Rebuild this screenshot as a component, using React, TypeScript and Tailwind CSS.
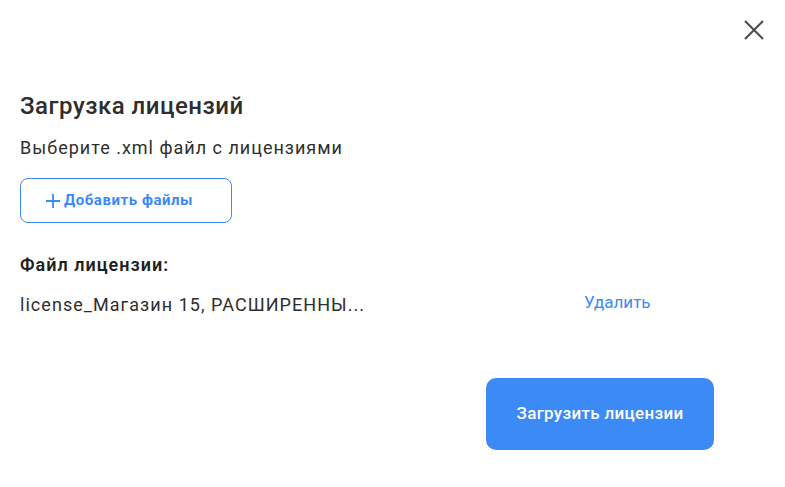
import React from "react";

export default function App() {
  return (
    <div className="w-[785px] h-[487px] bg-white flex flex-col" style={{ fontFamily: "Roboto, 'Noto Sans', sans-serif" }}>
      <div className="flex justify-end pt-[19px] pr-[20px]">
        <button className="w-[22px] h-[22px] flex items-center justify-center text-[#4a4a4a]">
          <svg width="22" height="22" viewBox="0 0 22 22" fill="none" stroke="currentColor" strokeWidth="2">
            <path d="M2 2 L20 20 M20 2 L2 20" />
          </svg>
        </button>
      </div>
      <div className="px-5">
        <h1 className="mt-[51px] text-[24px] leading-[28px] font-medium tracking-[0.5px] text-[#2e2e2e]">Загрузка лицензий</h1>
        <p className="mt-[16px] text-[18px] leading-[24px] tracking-[1px] text-[#2e2e2e]">Выберите .xml файл с лицензиями</p>
        <button className="mt-[18px] w-[212px] h-[45px] border border-[#3b8af5] rounded-[8px] flex items-center pl-[25px] gap-[4px] text-[#3b8af5] text-[15px] font-bold tracking-[0.55px]">
          <svg width="14" height="14" viewBox="0 0 14 14" stroke="currentColor" strokeWidth="1.8">
            <path d="M7 0 V14 M0 7 H14" />
          </svg>
          <span>Добавить файлы</span>
        </button>
        <div className="mt-[30px] text-[18px] leading-[24px] font-semibold tracking-[1px] text-[#1f1f1f]">Файл лицензии:</div>
        <div className="mt-[13px] flex items-center">
          <span className="w-[564px] text-[18px] leading-[24px] tracking-[1.05px] text-[#2e2e2e]">license_Магазин 15, РАСШИРЕННЫ...</span>
          <span className="pb-[6px] text-[17px] leading-[24px] text-[#3b8af5]">Удалить</span>
        </div>
        <div className="mt-[58px] flex justify-end pr-[51px]">
          <button className="w-[228px] h-[72px] rounded-[10px] bg-[#3b8af5] text-white text-[17px] font-medium tracking-[0.3px]">
            Загрузить лицензии
          </button>
        </div>
      </div>
    </div>
  );
}
